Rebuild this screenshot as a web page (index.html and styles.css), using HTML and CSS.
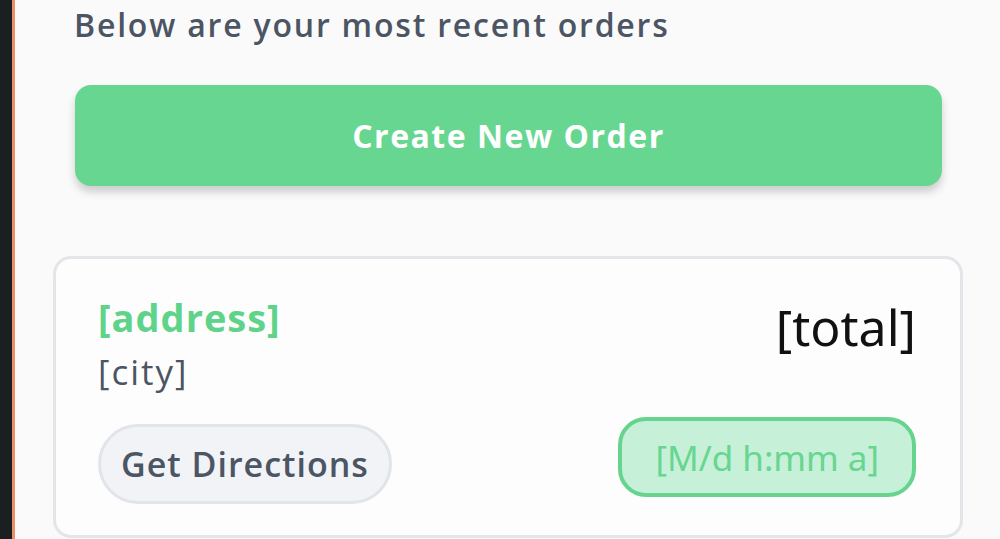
FILE: index.html
```html
<!DOCTYPE html>
<html>
<head>
<meta charset="utf-8">
<link rel="stylesheet" href="styles.css">
</head>
<body>
<div class="app">
  <div class="rail"></div>
  <main class="main">
    <h2 class="intro">Below are your most recent orders</h2>
    <button class="create">Create New Order</button>
    <div class="card">
      <div class="row top">
        <div class="place">
          <div class="address">[address]</div>
          <div class="city">[city]</div>
        </div>
        <div class="total">[total]</div>
      </div>
      <div class="row bottom">
        <button class="directions">Get Directions</button>
        <span class="stamp">[M/d h:mm a]</span>
      </div>
    </div>
  </main>
</div>
</body>
</html>
```

FILE: styles.css
```css
html, body {
  margin: 0;
  padding: 0;
  height: 100%;
  overflow: hidden;
}
body {
  background: #fafafa;
  font-family: "Open Sans", "Lato", sans-serif;
}
.app {
  display: flex;
  height: 539px;
}
.rail {
  width: 12px;
  flex: none;
  background: #1b1f22;
  border-right: 3px solid #e8906a;
}
.main {
  flex: 1;
  padding: 0 37px 0 38px;
  display: flex;
  flex-direction: column;
}
.intro {
  margin: 3px 0 0 21px;
  font-size: 32px;
  font-weight: 600;
  color: #4b5563;
  line-height: 44px;
  letter-spacing: 1.8px;
}
.create {
  margin: 38px 21px 0 22px;
  height: 101px;
  border: none;
  border-radius: 16px;
  background: #67d690;
  color: #ffffff;
  font-family: "Open Sans", sans-serif;
  font-size: 32px;
  font-weight: 700;
  letter-spacing: 1.5px;
  box-shadow: 0 6px 8px rgba(0, 0, 0, 0.18);
}
.card {
  margin-top: 70px;
  height: 282px;
  box-sizing: border-box;
  border: 3px solid #e3e5e9;
  border-radius: 18px;
  background: #fdfdfd;
  padding: 32px 44px 0 42px;
}
.row {
  display: flex;
  justify-content: space-between;
}
.address {
  font-size: 38px;
  font-weight: 700;
  color: #5fd38a;
  line-height: 52px;
  letter-spacing: 1px;
}
.city {
  font-size: 35px;
  color: #4b5563;
  line-height: 46px;
  margin-top: 6px;
  letter-spacing: 2px;
}
.total {
  font-family: "Noto Sans", sans-serif;
  font-size: 50px;
  color: #111111;
  line-height: 64px;
  margin-top: 4px;
}
.bottom {
  margin-top: 22px;
  align-items: flex-start;
}
.directions {
  height: 80px;
  padding: 0 20px;
  border: 3px solid #e1e4e9;
  border-radius: 40px;
  background: #f1f3f6;
  color: #4b5563;
  font-family: "Open Sans", sans-serif;
  font-size: 34px;
  font-weight: 600;
  letter-spacing: 1px;
  margin-top: 7px;
}
.stamp {
  display: flex;
  align-items: center;
  box-sizing: border-box;
  height: 80px;
  padding: 0 33px;
  border: 4px solid #66d48f;
  border-radius: 28px;
  background: #c6f0d8;
  color: #67d690;
  font-family: "Noto Sans", sans-serif;
  font-size: 35px;
}
```
